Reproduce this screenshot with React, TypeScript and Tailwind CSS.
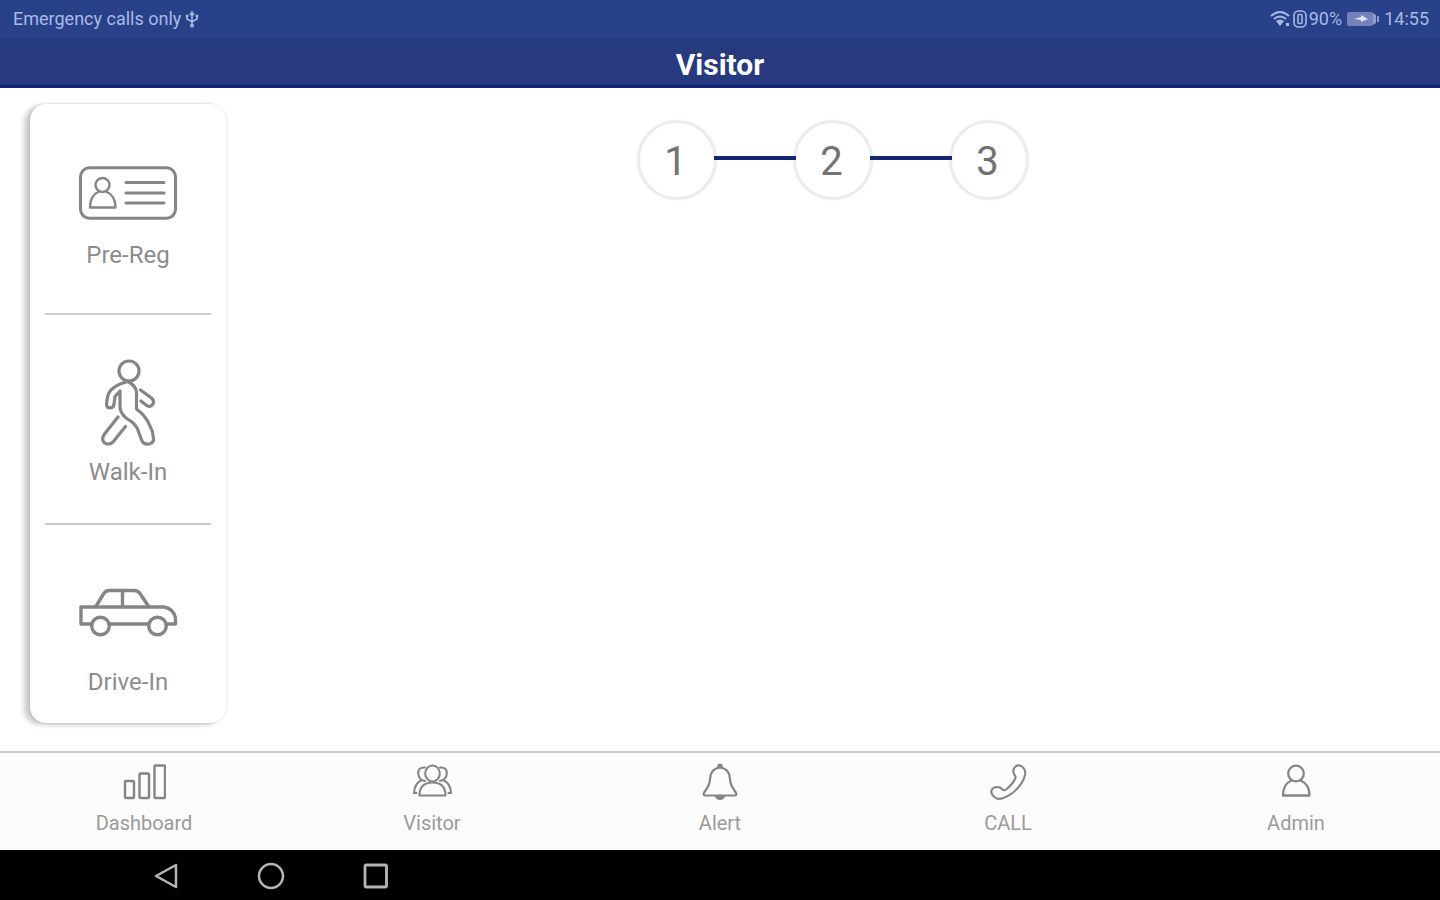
import type { ReactNode } from "react";

type Item = { label: string; icon: ReactNode };

function IdCardIcon() {
  return (
    <svg aria-hidden="true" width="100" height="56" viewBox="0 0 100 56" fill="none" stroke="#858585" strokeWidth="3" strokeLinecap="round" strokeLinejoin="round">
      <rect x="2.5" y="2.8" width="95" height="50.5" rx="9" />
      <g strokeWidth="2.4">
        <circle cx="24.5" cy="20" r="7" />
        <path d="M21 26.5C15 29 12 34 12 42.5H37.5C37.5 34 34 29 28 26.5" />
      </g>
      <path d="M48 17.5H86M48 28H86M48 38H86" />
    </svg>
  );
}

function WalkIcon() {
  return (
    <svg aria-hidden="true" width="56" height="90" viewBox="0 0 56 90" fill="none" stroke="#858585" strokeWidth="3.2" strokeLinecap="round" strokeLinejoin="round">
      <circle cx="29" cy="13" r="10" />
      <path d="M28 23.5Q17 26 11 32Q8 35 7.5 39L6.5 46Q6.5 50 10 50Q13.500 50 14 46L15 38.500L20 33V48Q20 55 26 60L32 64Q37 68 39 75L42 83Q44 87 49 86Q54 85 53.500 80Q53 73 50 68Q46 58 36.500 51V34Q36 28 28 23.500" />
      <path d="M40.500 32L51.500 40Q55 43 52.500 46.500Q50 50 46 47L41 43" />
      <path d="M18 59L4.500 76Q1 81 4 84.500Q8.500 88 13 84L25.500 68.500" />
    </svg>
  );
}

function CarIcon() {
  return (
    <svg aria-hidden="true" width="100" height="52" viewBox="0 0 100 52" fill="none" stroke="#858585" strokeWidth="3.4" strokeLinejoin="round">
      <path d="M13.500 37H3V20H86Q96 22 97.500 31V37H88M31 37H70" />
      <path d="M17.500 20L25.500 7Q27.500 3.500 31 3.500H56Q60 3.500 62 6.500L71 20M44.500 3.500V20" />
      <circle cx="22.500" cy="39" r="8.800" />
      <circle cx="79.500" cy="39" r="8.800" />
    </svg>
  );
}

function BarsIcon() {
  return (
    <svg aria-hidden="true" width="44" height="38" viewBox="0 0 44 38" fill="none" stroke="#858585" strokeWidth="2.4">
      <rect x="3" y="18" width="9" height="17" rx="1" />
      <rect x="17.5" y="10.500" width="9.5" height="24.500" rx="1" />
      <rect x="32.5" y="2.500" width="10.5" height="32.500" rx="1" />
    </svg>
  );
}

function GroupIcon() {
  return (
    <svg aria-hidden="true" width="44" height="38" viewBox="0 0 44 38" fill="none" stroke="#858585" strokeWidth="2.1" strokeLinecap="round" strokeLinejoin="round">
      <ellipse cx="22.500" cy="10.500" rx="7.300" ry="8" />
      <path d="M9.500 32.500C9.500 24 14 19.500 22.500 19.500C31 19.500 35.500 24 35.500 32.500Z" />
      <path d="M15 4.500C10 4 7.800 7 8.300 10.500Q8.500 15 12 17Q4.500 20 4 30H6.500M12 17L15 18" />
      <path d="M30 4.500C35 4 37.200 7 36.700 10.500Q36.500 15 33 17Q40.500 20 41 30H38.500M33 17L30 18" />
    </svg>
  );
}

function BellIcon() {
  return (
    <svg aria-hidden="true" width="44" height="38" viewBox="0 0 44 38" fill="none" stroke="#858585" strokeWidth="2.200" strokeLinecap="round" strokeLinejoin="round">
      <path d="M22 4.500C15.500 5 12 10 12 16C12 22 9 25.500 6.500 29C5 31.500 5.500 32.500 7.500 32.500H36.500C38.500 32.500 39 31.500 37.500 29C35 25.500 32 22 32 16C32 10 28.500 5 22 4.500Z" />
      <path d="M20.500 2.500Q22 .5 23.500 2.500V4H20.500ZM18 33H26Q25 36 22 36Q19 36 18 33Z" fill="#858585" />
    </svg>
  );
}

function PhoneIcon() {
  return (
    <svg aria-hidden="true" width="44" height="38" viewBox="0 0 44 38" fill="none" stroke="#858585" strokeWidth="2.100" strokeLinecap="round" strokeLinejoin="round">
      <path d="M30 3Q33 1.500 36 3.500Q40 6.500 39 12C37 21 28 31 17.500 35Q12 37 9 34.500Q4.500 31 5.500 27.500Q7 24 11 24Q14.500 24 16.500 26.500Q18 28 20 26.500Q27 21 29.500 15Q30 13.500 28.500 12Q25.500 6.500 30 3Z" />
    </svg>
  );
}

function PersonIcon() {
  return (
    <svg aria-hidden="true" width="44" height="38" viewBox="0 0 44 38" fill="none" stroke="#858585" strokeWidth="2.300" strokeLinecap="round" strokeLinejoin="round">
      <circle cx="22" cy="10.500" r="7.800" />
      <path d="M17.500 17.500C11.500 20 9 25 9 32.500H35.500C35.500 25 32.500 20 26.500 17.500" />
    </svg>
  );
}

function StatusBar() {
  return (
    <div className="flex h-[38px] items-center justify-between bg-[#284189] pr-[11px] pl-[13px] text-lg leading-6 text-[#a9b9e6]">
      <div className="flex items-center gap-1">
        <span>Emergency calls only</span>
        <svg aria-hidden="true" width="14" height="18" viewBox="0 0 14 18" fill="none" stroke="currentColor" strokeWidth="1.500">
          <path d="M7 3V15M2 6V9L7 12L12 9V6" />
          <path d="M7 1L9.500 5H4.500ZM5.500 14H8.500V17H5.500ZM1 5H3V7H1ZM11 5H13V7H11Z" fill="currentColor" strokeWidth=".5" />
        </svg>
      </div>
      <div className="flex items-center">
        <svg aria-hidden="true" width="22" height="18" viewBox="0 0 22 18" fill="none" stroke="currentColor" strokeWidth="2">
          <path d="M1 6Q10 -2 19 6M4 9Q10 4 16 9" />
          <path d="M6 11Q10 8 14 11L10 16ZM16 13H19V16H16Z" fill="currentColor" stroke="none" />
        </svg>
        <svg aria-hidden="true" width="17" height="20" viewBox="0 0 17 20" fill="none" stroke="currentColor" strokeWidth="1.600">
          <rect x="2" y="2" width="12" height="16" rx="4.500" />
          <rect x="6" y="5.500" width="4" height="9" rx="1" />
        </svg>
        <span>90%</span>
        <svg aria-hidden="true" className="mx-1" width="34" height="18" viewBox="0 0 34 18">
          <rect x="1" y="2" width="26" height="14" rx="2" fill="#7482bb" />
          <path d="M8 9L15 7V5L22 9L15 12V10Z" fill="#dfe6fb" />
          <path d="M27 3L30 5V13L27 15M31 6H33V12H31Z" fill="#8e9dd0" />
        </svg>
        <span>14:55</span>
      </div>
    </div>
  );
}

const entries: Item[] = [
  { label: "Pre-Reg", icon: <IdCardIcon /> },
  { label: "Walk-In", icon: <WalkIcon /> },
  { label: "Drive-In", icon: <CarIcon /> },
];

const tabs: Item[] = [
  { label: "Dashboard", icon: <BarsIcon /> },
  { label: "Visitor", icon: <GroupIcon /> },
  { label: "Alert", icon: <BellIcon /> },
  { label: "CALL", icon: <PhoneIcon /> },
  { label: "Admin", icon: <PersonIcon /> },
];

function EntryMenu() {
  return (
    <aside className="flex w-[196px] shrink-0 flex-col rounded-2xl bg-white px-[15px] pt-px shadow-[-6px_2px_5px_rgba(0,0,0,0.2),0_0_3px_rgba(0,0,0,0.16)]">
      {entries.map(({ label, icon }) => (
        <button
          key={label}
          type="button"
          className="flex h-[210px] flex-col items-center gap-2.5 border-b-2 border-[#cccccc] pt-[43px] text-2xl leading-7 text-[#8c8c8c] first:gap-[3px] last:h-[198px] last:border-b-0"
        >
          <span className="flex h-[90px] items-center">{icon}</span>
          <span>{label}</span>
        </button>
      ))}
    </aside>
  );
}

function Steps() {
  return (
    <ol className="flex flex-1 items-start justify-center pt-4">
      {[1, 2, 3].map((step) => (
        <li key={step} className="flex items-center">
          {step > 1 && <span className="z-10 -mx-[3px] mb-1 h-1 w-[82px] bg-[#12257c]" />}
          <span className="flex size-20 items-center justify-center rounded-full border-[3px] border-[#ececec] bg-white pt-1 pr-[3px] text-[40px] leading-10 text-[#727272] shadow-[0_0_3px_rgba(0,0,0,0.06)]">
            {step}
          </span>
        </li>
      ))}
    </ol>
  );
}

export default function App() {
  return (
    <div className="flex min-h-screen flex-col bg-white font-['Roboto',sans-serif]">
      <StatusBar />
      <header className="flex h-[50px] items-center justify-center border-b-[3px] border-[#10247c] bg-[#273a80] pt-1.5">
        <h1 className="text-[30px] leading-8 font-bold text-white">Visitor</h1>
      </header>
      <main className="flex flex-1 items-start pt-4 pb-7 pl-[30px]">
        <EntryMenu />
        <Steps />
      </main>
      <nav className="grid h-[99px] grid-cols-5 border-t-2 border-[#cbcbcb] bg-[#fcfcfc]">
        {tabs.map(({ label, icon }) => (
          <a key={label} href={`#${label.toLowerCase()}`} className="flex flex-col items-center gap-2.5 pt-2.5 text-xl leading-6 text-[#9a9a9a]">
            {icon}
            <span>{label}</span>
          </a>
        ))}
      </nav>
      <div className="flex h-[50px] items-center gap-[77px] bg-black pt-0.5 pl-[152px] text-[#b5b5b5]">
        <button type="button" aria-label="Back">
          <svg width="28" height="28" viewBox="0 0 28 28" fill="none" stroke="currentColor" strokeWidth="2.500" strokeLinejoin="round">
            <path d="M24 3V25L4 14Z" />
          </svg>
        </button>
        <button type="button" aria-label="Home">
          <svg width="28" height="28" viewBox="0 0 28 28" fill="none" stroke="currentColor" strokeWidth="2.500">
            <circle cx="14" cy="14" r="12" />
          </svg>
        </button>
        <button type="button" aria-label="Recent apps">
          <svg width="28" height="28" viewBox="0 0 28 28" fill="none" stroke="currentColor" strokeWidth="2.800">
            <rect x="3" y="3" width="21.500" height="22" rx="1.500" />
          </svg>
        </button>
      </div>
    </div>
  );
}
